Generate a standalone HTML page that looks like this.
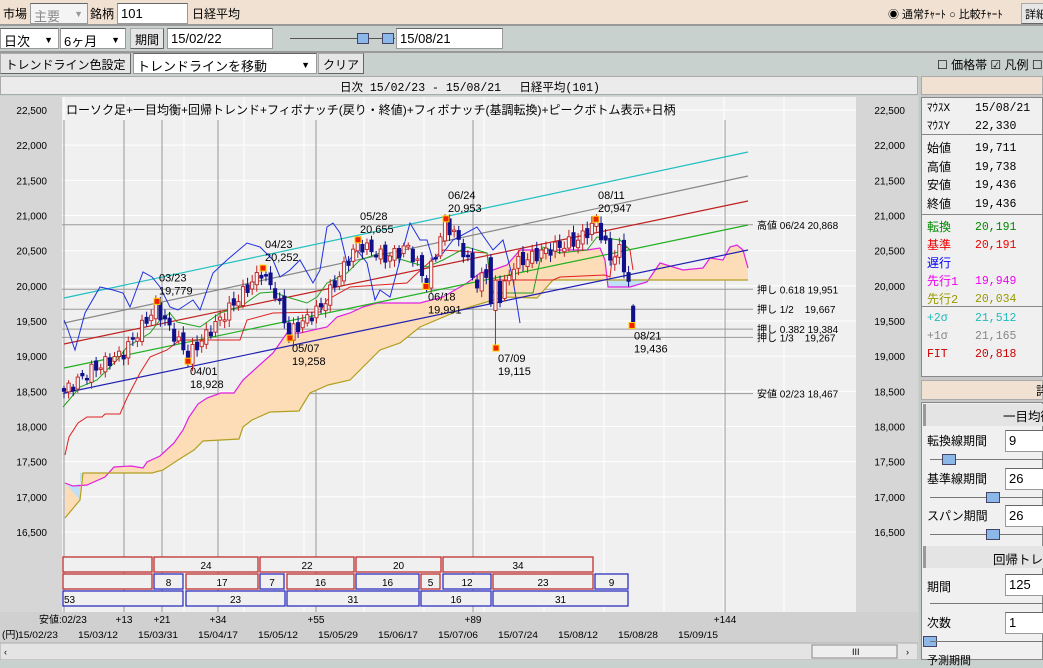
<!DOCTYPE html>
<html><head><meta charset="utf-8">
<style>
*{margin:0;padding:0;box-sizing:border-box}
body{width:1043px;height:660px;overflow:hidden;background:#c9d1ce;font-family:"Liberation Sans","Noto Sans CJK JP",sans-serif;font-size:12px;color:#000;position:relative}
.a{position:absolute;white-space:nowrap}
.inp{position:absolute;background:#fff;border:1px solid #999;border-top-color:#666;height:21px;padding:2px 3px;font-size:13px}
.btn{position:absolute;background:#e6e6e6;border:1px solid #aaa;border-right-color:#666;border-bottom-color:#666;height:21px;padding:2px 3px;font-size:12px;text-align:center}
.rp{font-family:"Liberation Mono","Noto Sans CJK JP",monospace;font-size:11px}
</style></head><body>
<!-- row 1 -->
<div class="a" style="left:0;top:0;width:1043px;height:26px;background:#f1e1d2;border-bottom:2px solid #999"></div>
<div class="a" style="left:3px;top:5px;font-size:12px">市場</div>
<div class="inp" style="left:30px;top:3px;width:58px;color:#888;background:#f4f4f4">主要 <span style="font-size:9px;position:absolute;right:4px;top:5px;color:#999">▼</span></div>
<div class="a" style="left:90px;top:5px;font-size:12px">銘柄</div>
<div class="inp" style="left:117px;top:3px;width:71px">101</div>
<div class="a" style="left:192px;top:5px;font-size:12px">日経平均</div>
<div class="a" style="left:888px;top:6px;font-size:11px">◉ 通常ﾁｬｰﾄ ○ 比較ﾁｬｰﾄ</div>
<div class="btn" style="left:1021px;top:3px;width:30px;font-size:11px">詳細</div>
<!-- row 2 -->
<div class="inp" style="left:0;top:28px;width:59px">日次 <span style="font-size:9px;position:absolute;right:5px;top:6px">▼</span></div>
<div class="inp" style="left:60px;top:28px;width:66px">6ヶ月<span style="font-size:9px;position:absolute;right:5px;top:6px">▼</span></div>
<div class="btn" style="left:130px;top:28px;width:34px">期間</div>
<div class="inp" style="left:167px;top:28px;width:106px">15/02/22</div>
<div class="a" style="left:290px;top:38px;width:105px;border-top:1px solid #555"></div>
<div class="a" style="left:357px;top:33px;width:12px;height:11px;background:#8bb8e8;border:1px solid #446"></div>
<div class="a" style="left:382px;top:33px;width:12px;height:11px;background:#8bb8e8;border:1px solid #446"></div>
<div class="inp" style="left:396px;top:28px;width:107px">15/08/21</div>
<div class="a" style="left:0;top:51px;width:1043px;border-top:2px solid #999"></div>
<!-- row 3 -->
<div class="btn" style="left:0;top:53px;width:131px;font-size:12px">トレンドライン色設定</div>
<div class="inp" style="left:133px;top:53px;width:184px">トレンドラインを移動<span style="font-size:9px;position:absolute;right:6px;top:6px">▼</span></div>
<div class="btn" style="left:318px;top:53px;width:46px">クリア</div>
<div class="a" style="left:937px;top:56px;font-size:12px">☐ 価格帯 ☑ 凡例 ☐</div>
<!-- chart area -->
<div class="a" style="left:0;top:76px;width:918px;height:19px;background:#ebebeb;border:1px solid #aaa"></div>
<div class="a rp" style="left:340px;top:79px;font-size:11.5px">日次 15/02/23 - 15/08/21　 日経平均(101)</div>
<div class="a" style="left:0;top:96px;width:918px;height:564px;background:#d6d6d6"></div>
<svg class="a" style="left:0;top:96px" width="918" height="564" viewBox="0 96 918 564" id="ch"></svg>
<!-- right panel -->
<div class="a" style="left:919px;top:76px;width:124px;height:584px;background:#c8c8c8"></div>
<div class="a" style="left:921px;top:76px;width:122px;height:19px;background:#f1e1d2;border:1px solid #aaa"></div>
<div class="a" style="left:921px;top:97px;width:122px;height:280px;background:#f0f0f0;border:1px solid #888"></div>
<div class="a" style="left:921px;top:134px;width:122px;border-top:1px solid #888"></div>
<div class="a" style="left:921px;top:214px;width:122px;border-top:1px solid #888"></div>
<div class="a" style="left:921px;top:306px;width:122px;border-top:1px solid #888"></div>
<div class="a rp" style="left:927px;top:100px;line-height:18px;font-size:11px">ﾏｳｽX<br>ﾏｳｽY</div>
<div class="a rp" style="left:975px;top:100px;line-height:18px;font-size:11.5px">15/08/21<br>22,330</div>
<div class="a rp" style="left:927px;top:140px;line-height:18.5px;font-size:12px">始値<br>高値<br>安値<br>終値</div>
<div class="a rp" style="left:975px;top:140px;line-height:18.5px;font-size:11.5px">19,711<br>19,738<br>19,436<br>19,436</div>
<div class="a rp" style="left:927px;top:219px;line-height:18px;font-size:12px"><span style="color:#080">転換</span><br><span style="color:#e00">基準</span><br><span style="color:#00f">遅行</span><br><span style="color:#e0e">先行1</span><br><span style="color:#990">先行2</span></div>
<div class="a rp" style="left:975px;top:219px;line-height:18px;font-size:11.5px"><span style="color:#080">20,191</span><br><span style="color:#e00">20,191</span><br>&nbsp;<br><span style="color:#e0e">19,949</span><br><span style="color:#990">20,034</span></div>
<div class="a rp" style="left:927px;top:310px;line-height:18px;font-size:11.5px"><span style="color:#2bb">+2σ</span><br><span style="color:#888">+1σ</span><br><span style="color:#c00">FIT</span></div>
<div class="a rp" style="left:975px;top:310px;line-height:18px;font-size:11.5px"><span style="color:#2bb">21,512</span><br><span style="color:#888">21,165</span><br><span style="color:#c00">20,818</span></div>
<div class="a" style="left:921px;top:380px;width:122px;height:20px;background:#f1e1d2;border:1px solid #aaa"></div>
<div class="a" style="left:1036px;top:382px;font-size:12px">詳</div>
<div class="a" style="left:921px;top:402px;width:122px;height:258px;background:#f0f0f0;border:1px solid #888"></div>
<div class="a" style="left:923px;top:404px;width:120px;height:22px;background:#e4e4e4;border-left:3px solid #999"></div>
<div class="a" style="left:1003px;top:406px;font-size:12.5px">一目均衡</div>
<div class="a" style="left:927px;top:432px;font-size:12px">転換線期間</div>
<div class="inp" style="left:1005px;top:430px;width:40px;height:22px">9</div>
<div class="a" style="left:930px;top:459px;width:113px;border-top:1px solid #777"></div>
<div class="a" style="left:942px;top:454px;width:14px;height:11px;background:#8bb8e8;border:1px solid #446"></div>
<div class="a" style="left:927px;top:470px;font-size:12px">基準線期間</div>
<div class="inp" style="left:1005px;top:468px;width:40px;height:22px">26</div>
<div class="a" style="left:930px;top:497px;width:113px;border-top:1px solid #777"></div>
<div class="a" style="left:986px;top:492px;width:14px;height:11px;background:#8bb8e8;border:1px solid #446"></div>
<div class="a" style="left:927px;top:507px;font-size:12px">スパン期間</div>
<div class="inp" style="left:1005px;top:505px;width:40px;height:22px">26</div>
<div class="a" style="left:930px;top:534px;width:113px;border-top:1px solid #777"></div>
<div class="a" style="left:986px;top:529px;width:14px;height:11px;background:#8bb8e8;border:1px solid #446"></div>
<div class="a" style="left:923px;top:546px;width:120px;height:22px;background:#e4e4e4;border-left:3px solid #999"></div>
<div class="a" style="left:993px;top:549px;font-size:12.5px">回帰トレ</div>
<div class="a" style="left:927px;top:578px;font-size:12px">期間</div>
<div class="inp" style="left:1005px;top:574px;width:40px;height:22px">125</div>
<div class="a" style="left:930px;top:603px;width:113px;border-top:1px solid #777"></div>
<div class="a" style="left:927px;top:614px;font-size:12px">次数</div>
<div class="inp" style="left:1005px;top:612px;width:40px;height:22px">1</div>
<div class="a" style="left:923px;top:636px;width:14px;height:11px;background:#8bb8e8;border:1px solid #446"></div>
<div class="a" style="left:930px;top:641px;width:113px;border-top:1px solid #777"></div>
<div class="a" style="left:927px;top:652px;font-size:11px">予測期間</div>
<script>
(function(){
var s=[],Y=function(p){return 110+(22500-p)*0.07033},X=function(i){return 64+4.59*i};
function P(a){return a.map(function(q){return q[0]+','+q[1]}).join(' ')}
s.push('<rect x="0" y="96" width="918" height="564" fill="#d6d6d6"/>');
s.push('<rect x="62" y="97" width="794" height="515" fill="#f0f0f0"/>');
s.push('<rect x="0" y="612" width="918" height="30" fill="#d0d0d0"/>');
var t='';
for(var k=0;k<=12;k++){var p=22500-500*k,y=Y(p);t+='<line x1="62" x2="856" y1="'+y+'" y2="'+y+'" stroke="#fff"/>';
 var lab=(p/1000|0)+','+String(p%1000).padStart(3,'0');
 t+='<text x="47" y="'+(y+4)+'" text-anchor="end" font-size="10">'+lab+'</text><text x="905" y="'+(y+4)+'" text-anchor="end" font-size="10">'+lab+'</text>';}
for(var k=0;k<13;k++){var x=64+k*60;t+='<line x1="'+x+'" x2="'+x+'" y1="97" y2="612" stroke="#fff"/>';}
s.push(t);
[64,124,162,218,316,473,725].forEach(function(x){s.push('<line x1="'+x+'" x2="'+x+'" y1="120" y2="612" stroke="#999"/>')});
[[20868,'高値 06/24 20,868'],[19951,'押し 0.618 19,951'],[19667,'押し 1/2    19,667'],[19384,'押し 0.382 19,384'],[19267,'押し 1/3    19,267'],[18467,'安値 02/23 18,467']].forEach(function(f){var y=Y(f[0]);s.push('<line x1="62" x2="753" y1="'+y+'" y2="'+y+'" stroke="#999"/><text x="757" y="'+(y+4)+'" font-size="10" xml:space="preserve">'+f[1]+'</text>')});
var pink=[[65,483],[73,486],[87,485],[105,477],[114,467],[131,466],[143,468],[147,462],[160,456],[174,443],[183,430],[189,417],[198,404],[207,398],[221,393],[234,393],[243,380],[273,353],[287,333],[300,333],[327,327],[337,317],[350,313],[363,307],[377,303],[420,303],[443,297],[467,283],[480,273],[493,270],[507,265],[520,250],[587,250],[600,248],[605,260],[608,287],[630,287],[647,282],[660,263],[683,270],[703,268],[710,258],[723,260],[730,247],[737,245],[743,250],[748,268]];
var olive=[[65,518],[80,500],[83,473],[152,473],[163,470],[178,460],[194,450],[203,441],[239,439],[243,427],[252,420],[270,412],[299,411],[310,393],[328,385],[350,380],[380,350],[400,343],[420,327],[460,310],[503,297],[537,298],[553,280],[748,280]];
s.push('<polygon points="'+P(pink)+' '+P(olive.slice().reverse())+'" fill="#fddcb8"/>');
s.push('<polygon points="607,280 608,287 630,287 647,282 652,280" fill="#bfe0f5"/>');
s.push('<polygon points="65,483 73,486 80,484 83,473 80,473 80,500" fill="#bfe0f5"/>');
s.push('<polyline points="'+P(pink)+'" fill="none" stroke="#e020e0" stroke-width="1.2"/>');
s.push('<polyline points="'+P(olive)+'" fill="none" stroke="#b0a020" stroke-width="1.2"/>');
[['#20c0c0',298,152],['#888',323,176],['#c02020',344,201],['#20b020',368,225],['#2020b0',393,250]].forEach(function(r){s.push('<line x1="64" y1="'+r[1]+'" x2="748" y2="'+r[2]+'" stroke="'+r[0]+'" stroke-width="1.2"/>')});
s.push('<polyline fill="none" stroke="#e02020" points="65,455 69,437 78,423 87,417 102,417 105,414 120,414 127,398 140,373 150,357 167,350 180,340 240,340 247,320 273,313 320,312 327,300 350,287 407,283 413,277 443,250 487,253 490,280 553,280 560,277 605,275 610,277 612,260 620,253 627,247 630,250 633,270"/>');
s.push('<polyline fill="none" stroke="#20a020" points="63,407 80,387 97,380 117,360 127,347 150,333 160,320 170,313 177,322 200,327 220,313 240,307 260,293 273,292 287,297 307,303 317,297 327,283 347,273 360,260 380,253 393,257 413,263 427,267 443,260 467,247 487,253 493,293 533,293 543,247 560,253 587,250 597,237 620,240 630,250"/>');
s.push('<polyline fill="none" stroke="#2030e0" points="64,320 67,327 75,350 85,313 100,287 113,290 123,293 130,307 143,272 152,277 160,287 170,307 178,310 193,300 200,310 213,273 227,260 247,243 260,247 273,260 280,277 290,270 300,260 313,283 320,270 327,227 333,223 340,233 347,263 357,250 367,263 375,300 380,290 390,297 410,223 420,240 427,240 433,260 443,253 453,240 477,227 493,250 503,240 510,267 513,280 520,323"/>');
var piv=[[0,18500],[6,18800],[13,19050],[20,19700],[24,19300],[27,19000],[35,19600],[43,20200],[46,19900],[49,19320],[56,19700],[64,20600],[70,20400],[75,20550],[79,20050],[83,20900],[86,20650],[90,20000],[93,20300],[94,19700],[98,20300],[105,20500],[112,20650],[116,20900],[119,20400],[121,20500],[123,20050],[124,19650]];
function val(i){for(var j=0;j<piv.length-1;j++){if(i>=piv[j][0]&&i<=piv[j+1][0]){var f=(i-piv[j][0])/(piv[j+1][0]-piv[j][0]);return piv[j][1]+f*(piv[j+1][1]-piv[j][1]);}}return 19600}
var c='',prev=18480;
for(var i=0;i<125;i++){var x=X(i),cl=val(i)+Math.sin(i*2.3)*90,op=prev+Math.cos(i*1.7)*60;
 var hi,lo;
 if(i==124){op=19711;cl=19436}
 hi=Math.max(op,cl)+40+Math.abs(Math.sin(i*3.1))*60;lo=Math.min(op,cl)-40-Math.abs(Math.cos(i*2.7))*60;
 if(i==124){hi=19738;lo=19436}
 if(i==94){op=19650;cl=20080;lo=19115;hi=20150}
 if(i==93){op=20400;cl=19750;lo=19700;hi=20450}
 var up=cl>=op,col=up?'#c02020':'#10108a';
 var yt=Y(Math.max(op,cl)),yb=Y(Math.min(op,cl));if(yb-yt<1.5)yb=yt+1.5;
 c+='<line x1="'+x+'" x2="'+x+'" y1="'+Y(hi)+'" y2="'+Y(lo)+'" stroke="'+col+'"/>';
 c+='<rect x="'+(x-1.6)+'" y="'+yt+'" width="3.2" height="'+(yb-yt)+'" fill="'+(up?'#f4f4f4':col)+'" stroke="'+col+'" stroke-width="0.9"/>';
 prev=cl;}
s.push(c);
[[157,19779,'03/23','19,779',-1],[188,18928,'04/01','18,928',1],[263,20252,'04/23','20,252',-1],[290,19258,'05/07','19,258',1],[358,20655,'05/28','20,655',-1],[426,19991,'06/18','19,991',1],[446,20953,'06/24','20,953',-1],[496,19115,'07/09','19,115',1],[596,20947,'08/11','20,947',-1],[632,19436,'08/21','19,436',1]].forEach(function(k){var y=Y(k[1]);
 s.push('<rect x="'+(k[0]-3)+'" y="'+(y-3)+'" width="6" height="6" fill="#f02000" stroke="#ffd000"/>');
 var ty=k[4]<0?y-20:y+14;
 s.push('<text x="'+(k[0]+2)+'" y="'+ty+'" font-size="11">'+k[2]+'</text><text x="'+(k[0]+2)+'" y="'+(ty+13)+'" font-size="11">'+k[3]+'</text>');});
s.push('<text x="66" y="114" font-size="12" font-family="Liberation Sans,Noto Sans CJK JP,sans-serif">ローソク足+一目均衡+回帰トレンド+フィボナッチ(戻り・終値)+フィボナッチ(基調転換)+ピークボトム表示+日柄</text>');
var b='';
function box(x1,x2,y,col,lab){b+='<rect x="'+x1+'" y="'+y+'" width="'+(x2-x1)+'" height="15" fill="#f0f0f0" stroke="'+col+'" stroke-width="1.3"/>';if(lab)b+='<text x="'+((x1+x2)/2)+'" y="'+(y+12)+'" font-size="10" text-anchor="middle">'+lab+'</text>';}
var R='#c03030',B='#3030c0';
box(63,152,557,R);box(154,258,557,R,'24');box(260,354,557,R,'22');box(356,441,557,R,'20');box(443,593,557,R,'34');
box(63,152,574,R);box(154,183,574,B,'8');box(186,258,574,R,'17');box(260,284,574,B,'7');box(287,354,574,R,'16');box(356,419,574,B,'16');box(421,440,574,R,'5');box(443,491,574,B,'12');box(493,593,574,R,'23');box(595,628,574,B,'9');
box(63,183,591,B);box(186,285,591,B,'23');box(287,419,591,B,'31');box(421,491,591,B,'16');box(493,628,591,B,'31');
b+='<text x="64" y="603" font-size="10">53</text>';
s.push(b);
var l='<text x="39" y="623" font-size="10">安値:02/23</text>';
[[124,'+13'],[162,'+21'],[218,'+34'],[316,'+55'],[473,'+89'],[725,'+144']].forEach(function(q){l+='<text x="'+q[0]+'" y="623" font-size="10" text-anchor="middle">'+q[1]+'</text>'});
l+='<text x="2" y="638" font-size="10">(円)</text>';
['15/02/23','15/03/12','15/03/31','15/04/17','15/05/12','15/05/29','15/06/17','15/07/06','15/07/24','15/08/12','15/08/28','15/09/15'].forEach(function(d,k){l+='<text x="'+(38+k*60)+'" y="638" font-size="9.5" text-anchor="middle" textLength="40" lengthAdjust="spacingAndGlyphs">'+d+'</text>'});
s.push(l);
s.push('<rect x="0" y="643" width="918" height="17" fill="#e4e4e4" stroke="#aaa"/><rect x="812" y="645" width="85" height="13" fill="#eee" stroke="#888"/><text x="852" y="655" font-size="9">III</text><text x="4" y="655" font-size="9">‹</text><text x="906" y="655" font-size="9">›</text>');
document.getElementById('ch').innerHTML=s.join('');
})();
</script>
</body></html>
